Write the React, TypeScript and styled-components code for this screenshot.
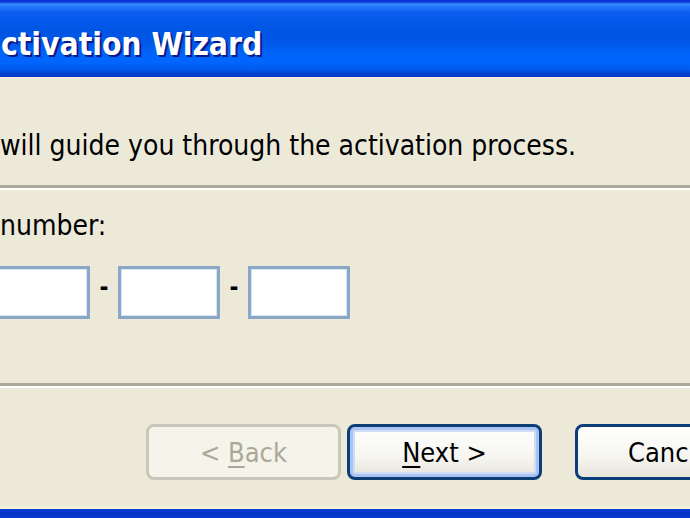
import React from "react";
import styled, { createGlobalStyle } from "styled-components";

const Global = createGlobalStyle`
  html, body { margin: 0; padding: 0; }
  body { width: 690px; height: 518px; overflow: hidden; background: #ece9d8; }
  #root { width: 690px; height: 518px; }
`;

const Window = styled.div`
  width: 690px;
  height: 518px;
  overflow: hidden;
  display: flex;
  flex-direction: column;
  background: #ece9d8;
  font-family: "DejaVu Sans Condensed", "DejaVu Sans", sans-serif;
  color: #000;
`;

const TitleBar = styled.div`
  height: 78px;
  flex: none;
  display: flex;
  align-items: center;
  box-sizing: border-box;
  padding: 10px 0 0 1px;
  background: linear-gradient(
    to bottom,
    #0a2fd2 0px,
    #0a3ad8 2px,
    #3a8cff 4px,
    #2a7bff 6px,
    #0b5ef0 12px,
    #0055e3 30px,
    #0056e6 42px,
    #0063f8 52px,
    #0066ff 62px,
    #0058ea 70px,
    #0344d0 73px,
    #0238c4 77px,
    #f4efdc 77px,
    #f4efdc 78px
  );
`;

const Title = styled.span`
  font-family: "DejaVu Sans Condensed", "DejaVu Sans", sans-serif;
  font-weight: bold;
  font-size: 31.5px;
  color: #fff;
  text-shadow: 2px 2px 0 #0a1a8a;
  white-space: nowrap;
`;

const Body = styled.div`
  flex: 1;
  display: flex;
  flex-direction: column;
`;

const Intro = styled.p`
  margin: 0;
  padding: 50px 0 0 0;
  height: 107px;
  box-sizing: border-box;
  font-size: 28px;
  line-height: 36px;
  white-space: nowrap;
`;

const Separator = styled.div`
  height: 0;
  border-top: 3px solid #aca899;
  border-bottom: 2px solid #fff;
`;

const Content = styled.div`
  height: 193px;
  box-sizing: border-box;
  padding-top: 18px;
  display: flex;
  flex-direction: column;
`;

const Label = styled.div`
  font-size: 28px;
  line-height: 36px;
  white-space: nowrap;
`;

const KeyRow = styled.div`
  margin-top: 22px;
  display: flex;
  align-items: center;
`;

const KeyBox = styled.input<{ $first?: boolean }>`
  width: 102px;
  height: 53px;
  box-sizing: border-box;
  border: 3px solid #8aa7c7;
  box-shadow: inset 0 0 0 1px #d8e3ef;
  background: #fff;
  margin: 0 0 0 ${(p) => (p.$first ? "-12px" : "0")};
  padding: 0;
  outline: none;
  flex: none;
`;

const Dash = styled.span`
  width: 28px;
  text-align: center;
  font-size: 24px;
  font-weight: bold;
  line-height: 1;
  margin-top: -12px;
`;

const ButtonRow = styled.div`
  flex: 1;
  display: flex;
  align-items: flex-start;
  padding: 36px 0 0 146px;
  gap: 6px;
`;

const Button = styled.button<{ $kind: "disabled" | "default" | "normal" }>`
  flex: none;
  width: 195px;
  height: 56px;
  box-sizing: border-box;
  border-radius: 8px;
  font-family: "DejaVu Sans Condensed", "DejaVu Sans", sans-serif;
  font-size: 27px;
  padding: 0;
  cursor: default;
  border: 3px solid
    ${(p) => (p.$kind === "disabled" ? "#c9c7ba" : "#0b3d78")};
  color: ${(p) => (p.$kind === "disabled" ? "#aca899" : "#000")};
  background: ${(p) =>
    p.$kind === "disabled"
      ? "#f5f4ea"
      : "linear-gradient(to bottom, #ffffff 0%, #f6f5f0 60%, #e6e4da 100%)"};
  box-shadow: ${(p) =>
    p.$kind === "default"
      ? "inset 0 0 0 3px #a9c4f2, inset 0 0 0 5px #cedcf6"
      : "none"};
`;

const CancelButton = styled(Button)`
  margin-left: 27px;
  text-align: left;
  padding-left: 50px;
`;

const Key = styled.span`
  text-decoration: underline;
  text-underline-offset: 4px;
  text-decoration-thickness: 2px;
`;

const BottomEdge = styled.div`
  height: 12px;
  flex: none;
  background: linear-gradient(
    to bottom,
    #f7f1d9 0px,
    #f7f1d9 3px,
    #0a3fd8 3px,
    #0433c2 7px,
    #0a3ad2 12px
  );
`;

export default function App() {
  return (
    <>
      <Global />
      <Window>
        <TitleBar>
          <Title>ctivation Wizard</Title>
        </TitleBar>
        <Body>
          <Intro>will guide you through the activation process.</Intro>
          <Separator />
          <Content>
            <Label>number:</Label>
            <KeyRow>
              <KeyBox $first aria-label="part 1" />
              <Dash>-</Dash>
              <KeyBox aria-label="part 2" />
              <Dash>-</Dash>
              <KeyBox aria-label="part 3" />
            </KeyRow>
          </Content>
          <Separator />
          <ButtonRow>
            <Button $kind="disabled" disabled>
              &lt; <Key>B</Key>ack
            </Button>
            <Button $kind="default">
              <Key>N</Key>ext &gt;
            </Button>
            <CancelButton $kind="normal">Canc</CancelButton>
          </ButtonRow>
        </Body>
        <BottomEdge />
      </Window>
    </>
  );
}
